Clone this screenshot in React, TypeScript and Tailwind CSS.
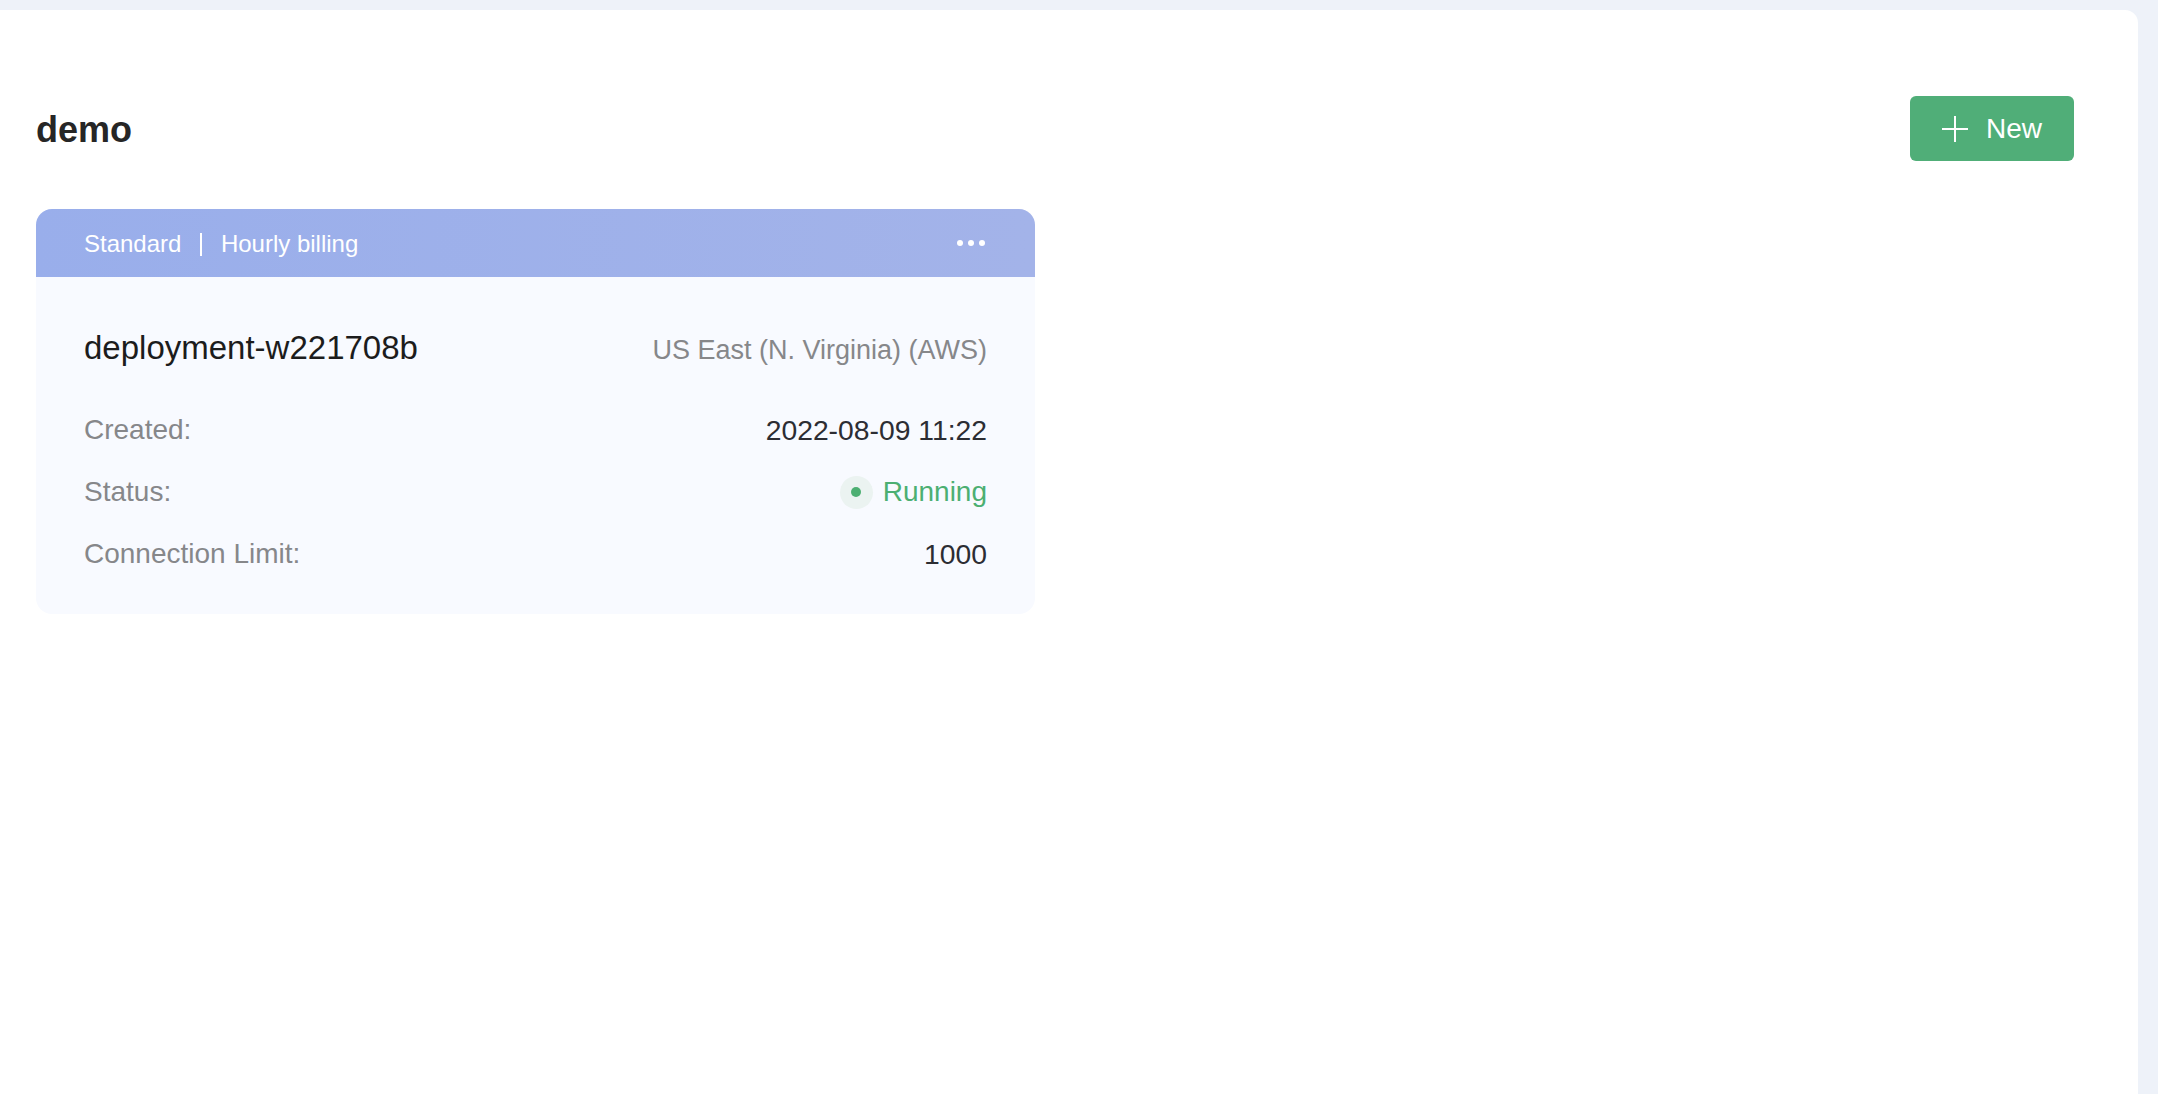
const rows = [
  { label: 'Created:', value: '2022-08-09 11:22' },
  { label: 'Status:', value: 'Running', status: true },
  { label: 'Connection Limit:', value: '1000' },
];

function DeploymentCard() {
  return (
    <div className="w-[999px] overflow-hidden rounded-[16px] bg-[#f8faff]">
      <div className="flex h-[68px] items-center justify-between bg-gradient-to-r from-[#99aeeb] to-[#a3b3e9] pl-[48px] pr-[50px] text-[24px] text-white">
        <div className="flex items-center pt-[2px]">
          <span>Standard</span>
          <span className="mx-[19px] h-[23px] w-[1.5px] bg-white" />
          <span>Hourly billing</span>
        </div>
        <div className="flex items-center gap-[5px]">
          <span className="h-[6px] w-[6px] rounded-full bg-white" />
          <span className="h-[6px] w-[6px] rounded-full bg-white" />
          <span className="h-[6px] w-[6px] rounded-full bg-white" />
        </div>
      </div>
      <div className="px-[48px] pb-[40px] pt-[51px]">
        <div className="flex items-baseline justify-between">
          <span className="text-[33px] leading-[40px] text-[#1c1c1c]">deployment-w221708b</span>
          <span className="text-[27px] leading-[40px] text-[#86878a]">US East (N. Virginia) (AWS)</span>
        </div>
        <div className="mt-[40px] flex flex-col gap-[22px]">
          {rows.map(r => (
            <div key={r.label} className="flex h-[40px] items-center justify-between text-[28px] leading-[40px]">
              <span className="text-[#86878a]">{r.label}</span>
              {r.status ? (
                <span className="flex items-center gap-[10px] text-[#4caf72]">
                  <span className="flex h-[33px] w-[33px] items-center justify-center rounded-full bg-[#ebf3f1]">
                    <span className="h-[10px] w-[10px] rounded-full bg-[#4caf72]" />
                  </span>
                  {r.value}
                </span>
              ) : (
                <span className="text-[28.3px] text-[#2c2d33]">{r.value}</span>
              )}
            </div>
          ))}
        </div>
      </div>
    </div>
  );
}

export default function App() {
  return (
    <div className="flex min-h-screen bg-[#eef2f9] pr-[20px] pt-[10px] font-['Liberation_Sans',Arial,sans-serif]">
      <main className="flex-1 rounded-tr-[13px] bg-white pl-[36px] pr-[64px] pt-[86px]">
        <div className="flex h-[65px] items-center justify-between">
          <h1 className="pt-[2px] text-[36px] font-bold text-[#262626]">demo</h1>
          <button className="flex h-[65px] w-[164px] items-center justify-center gap-[18px] rounded-[6px] bg-[#50ae78] text-[28px] text-white">
            <svg width="26" height="26" viewBox="0 0 26 26" fill="none" stroke="currentColor" strokeWidth="2">
              <path d="M13 0v26M0 13h26" />
            </svg>
            <span>New</span>
          </button>
        </div>
        <div className="mt-[48px]">
          <DeploymentCard />
        </div>
      </main>
    </div>
  );
}
